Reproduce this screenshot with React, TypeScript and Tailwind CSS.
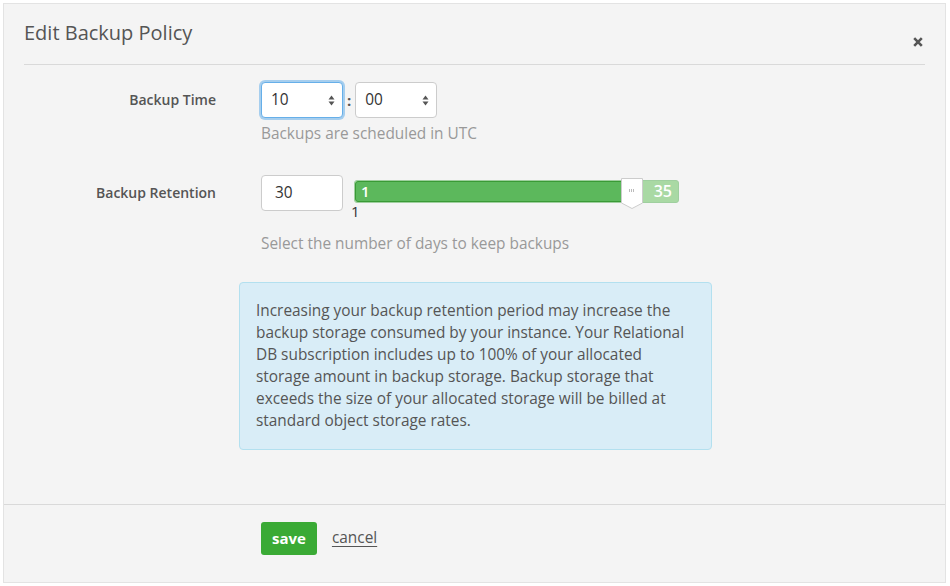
import React from 'react';

const font = { fontFamily: '"Open Sans", "Noto Sans", sans-serif' };

const Spinner: React.FC = () => (
  <svg width="7" height="11" viewBox="0 0 7 11" className="text-[#555]">
    <path d="M3.5 0.5 L6.5 4.5 H0.5 Z" fill="currentColor" />
    <path d="M3.5 10.5 L6.5 6.5 H0.5 Z" fill="currentColor" />
  </svg>
);

const FakeSelect: React.FC<{ value: string; focused?: boolean }> = ({ value, focused }) => (
  <div
    className={
      'flex h-[36px] w-[82px] items-center justify-between rounded-[4px] bg-white pl-[9px] pr-[7px] text-[15.4px] text-[#333] ' +
      (focused
        ? 'border border-[#66afe9] shadow-[0_0_0_2px_rgba(102,175,233,0.55)]'
        : 'border border-[#ccc]')
    }
  >
    <span>{value}</span>
    <Spinner />
  </div>
);

const RangeSlider: React.FC<{ min: number; max: number; value: number }> = ({ min, max, value }) => {
  const pct = ((value - min) / (max - min)) * 100;
  return (
    <div className="relative mt-[5px] w-[325px]">
      <div className="relative h-[23px] overflow-hidden rounded-[3px] border border-[#9fcf9f] bg-[#a9d9a4]">
        <div
          className="absolute left-0 top-0 h-full rounded-l-[3px] border border-[#3a9a36] bg-[#5cb85c]"
          style={{ width: `${pct}%` }}
        />
        <span className="absolute left-[6px] top-[0px] text-[15px] font-semibold leading-[20px] text-white">{min}</span>
        <span className="absolute right-[6px] top-[0px] text-[16px] font-semibold leading-[20px] text-white">{max}</span>
      </div>
      <div className="absolute top-[-2px]" style={{ left: `calc(${pct}% - 10px)` }}>
        <svg width="22" height="31" viewBox="0 0 22 31">
          <path d="M0.5 0.5 H21.5 V25 L11 30.5 L0.5 25 Z" fill="#fff" stroke="#ccc" />
          <g fill="#bbb">
            <rect x="8" y="11" width="1" height="3" />
            <rect x="10" y="11" width="1" height="3" />
            <rect x="12" y="11" width="1" height="3" />
          </g>
        </svg>
      </div>
      <div className="ml-[-3px] text-[15px] leading-[16px] text-[#333]">{min}</div>
    </div>
  );
};

export default function App() {
  return (
    <div className="h-[586px] w-[950px] bg-white p-[3px]" style={font}>
      <div className="flex h-[580px] w-[943px] flex-col border border-[#e3e3e3] bg-[#f4f4f4]">
        {/* header */}
        <div className="mx-[20px] flex items-start justify-between border-b border-[#d9d9d9] pb-[16px] pt-[14px]">
          <h1 className="text-[20px] leading-[30px] text-[#555]">Edit Backup Policy</h1>
          <svg width="10" height="10" viewBox="0 0 10 10" className="mr-[2px] mt-[19px]">
            <path d="M1.2 1.2 L8.8 8.8 M8.8 1.2 L1.2 8.8" stroke="#555" strokeWidth="2.6" />
          </svg>
        </div>

        {/* body */}
        <div className="flex-1 pt-[17px]">
          <div className="grid grid-cols-[212px_1fr] gap-x-[45px]">
            <div className="pt-[7px] text-right text-[14px] font-semibold leading-[22px] text-[#555]">Backup Time</div>
            <div>
              <div className="flex items-center">
                <FakeSelect value="10" focused />
                <span className="mx-[4px] text-[15px] font-bold text-[#555]">:</span>
                <FakeSelect value="00" />
              </div>
              <p className="mt-[5px] text-[15.4px] leading-[22px] text-[#999]">Backups are scheduled in UTC</p>
            </div>

            <div className="mt-[30px] pt-[7px] text-right text-[14px] font-semibold leading-[22px] text-[#555]">
              Backup Retention
            </div>
            <div className="mt-[30px]">
              <div className="flex items-start gap-[11px]">
                <div className="flex h-[36px] w-[82px] items-center rounded-[4px] border border-[#ccc] bg-white pl-[13px] text-[15.4px] text-[#333]">
                  30
                </div>
                <RangeSlider min={1} max={35} value={30} />
              </div>
              <p className="mt-[14px] text-[15.4px] leading-[22px] text-[#999]">Select the number of days to keep backups</p>
            </div>
          </div>

          <div className="ml-[235px] mt-[27px] w-[473px] rounded-[4px] border border-[#b3e0ef] bg-[#d9edf7] px-[16px] pb-[17px] pt-[17px] text-[15.4px] leading-[22px] text-[#555]">
            Increasing your backup retention period may increase the backup storage consumed by your instance. Your
            Relational DB subscription includes up to 100% of your allocated storage amount in backup storage. Backup
            storage that exceeds the size of your allocated storage will be billed at standard object storage rates.
          </div>
        </div>

        {/* footer */}
        <div className="flex h-[78px] items-start gap-[15px] border-t border-[#d9d9d9] pl-[257px] pt-[17px]">
          <button className="h-[33px] rounded-[3px] bg-[#3aaa35] px-[11px] text-[15px] font-bold text-white">save</button>
          <a className="mt-[5px] text-[15.4px] leading-[22px] text-[#555] underline underline-offset-[3px]">cancel</a>
        </div>
      </div>
    </div>
  );
}
